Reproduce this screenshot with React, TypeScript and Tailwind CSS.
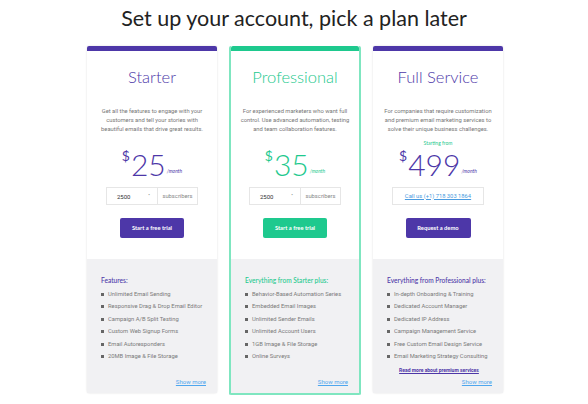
const PURPLE = "text-[#4d37a8]";

type Plan = {
  name: string;
  desc: string[];
  price: string;
  accent: "purple" | "green";
  starting?: boolean;
  call?: string;
  button: string;
  featuresTitle: string;
  features: string[];
  readMore?: boolean;
};

const plans: Plan[] = [
  {
    name: "Starter",
    desc: [
      "Get all the features to engage with your",
      "customers and tell your stories with",
      "beautiful emails that drive great results.",
    ],
    price: "25",
    accent: "purple",
    button: "Start a free trial",
    featuresTitle: "Features:",
    features: [
      "Unlimited Email Sending",
      "Responsive Drag & Drop Email Editor",
      "Campaign A/B Split Testing",
      "Custom Web Signup Forms",
      "Email Autoresponders",
      "20MB Image & File Storage",
    ],
  },
  {
    name: "Professional",
    desc: [
      "For experienced marketers who want full",
      "control. Use advanced automation, testing",
      "and team collaboration features.",
    ],
    price: "35",
    accent: "green",
    button: "Start a free trial",
    featuresTitle: "Everything from Starter plus:",
    features: [
      "Behavior-Based Automation Series",
      "Embedded Email Images",
      "Unlimited Sender Emails",
      "Unlimited Account Users",
      "1GB Image & File Storage",
      "Online Surveys",
    ],
  },
  {
    name: "Full Service",
    desc: [
      "For companies that require customization",
      "and premium email marketing services to",
      "solve their unique business challenges.",
    ],
    price: "499",
    accent: "purple",
    starting: true,
    call: "Call us (+1) 718 303 1864",
    button: "Request a demo",
    featuresTitle: "Everything from Professional plus:",
    features: [
      "In-depth Onboarding & Training",
      "Dedicated Account Manager",
      "Dedicated IP Address",
      "Campaign Management Service",
      "Free Custom Email Design Service",
      "Email Marketing Strategy Consulting",
    ],
    readMore: true,
  },
];

const PlanCard = ({ plan }: { plan: Plan }) => {
  const green = plan.accent === "green";
  const accentText = green ? "text-[#1ec98e]" : PURPLE;
  const accentBg = green ? "bg-[#1ec98e]" : "bg-[#4d37a8]";

  return (
    <div
      className={
        green
          ? "w-[132px] flex flex-col border-2 border-t-0 border-[#7fe6c0] rounded-[2px]"
          : "w-[130px] flex flex-col shadow-[0_0_2px_rgba(0,0,0,0.15)] rounded-[2px]"
      }
    >
      <div className={`h-[5px] ${accentBg} rounded-t-[2px]`} />
      <div className="h-[208px] bg-white flex flex-col items-center">
        <h2 className={`mt-[15px] text-[16.5px] leading-[22px] font-light ${accentText}`} style={{ fontFamily: "Lato, sans-serif" }}>
          {plan.name}
        </h2>
        <div className="mt-[19px] text-[5.8px] leading-[9px] text-[#777] text-center whitespace-nowrap" style={{ fontFamily: "Roboto, sans-serif" }}>
          {plan.desc.map((l) => (
            <div key={l}>{l}</div>
          ))}
        </div>
        <div className="h-[13px] flex items-end">
          {plan.starting && (
            <span className="text-[5px] text-[#1ec98e]" style={{ fontFamily: "Lato, sans-serif" }}>
              Starting from
            </span>
          )}
        </div>
        <div className={`mt-[2px] flex items-start ${accentText}`} style={{ fontFamily: "Lato, sans-serif" }}>
          <span className="text-[14px] leading-[14px] font-normal">$</span>
          <span className="text-[30px] leading-[30px] font-light ml-[1px]">{plan.price}</span>
          <span className="text-[5px] italic self-end mb-[4px] ml-[1px]">/month</span>
        </div>
        {plan.call ? (
          <div className="mt-[8px] h-[18px] w-[92px] border border-[#e6e6e6] flex items-center justify-center text-[5.8px] text-[#4a9be0] underline" style={{ fontFamily: "Roboto, sans-serif" }}>
            {plan.call}
          </div>
        ) : (
          <div className="mt-[8px] h-[18px] w-[92px] border border-[#e6e6e6] flex text-[5.8px]" style={{ fontFamily: "Roboto, sans-serif" }}>
            <div className="w-[51px] border-r border-[#e6e6e6] flex items-center justify-between pl-[10px] pr-[7px] text-[#333]">
              <span className="text-[6px]">2500</span>
              <span className="text-[#888] text-[5px]">•</span>
            </div>
            <div className="flex-1 flex items-center justify-center text-[#888]">subscribers</div>
          </div>
        )}
        <div
          className={`mt-[13px] h-[20px] ${plan.call ? "w-[65px]" : "w-[64px]"} ${accentBg} rounded-[2px] flex items-center justify-center text-white text-[5.8px] font-bold`}
          style={{ fontFamily: "Lato, sans-serif" }}
        >
          {plan.button}
        </div>
      </div>
      <div className="h-[134px] bg-[#f1f1f3] flex flex-col pl-[14px] pr-[8px]">
        <div className={`mt-[17px] text-[6.6px] leading-[9px] font-medium whitespace-nowrap ${accentText}`} style={{ fontFamily: "Lato, sans-serif" }}>
          {plan.featuresTitle}
        </div>
        <ul className="mt-[3px] text-[5.8px] text-[#7a7a7a] whitespace-nowrap" style={{ fontFamily: "Roboto, sans-serif" }}>
          {plan.features.map((f) => (
            <li key={f} className="h-[12.5px] flex items-center">
              <span className="w-[3px] h-[3px] bg-[#666] mr-[4px]" />
              {f}
            </li>
          ))}
        </ul>
        {plan.readMore ? (
          <div className="mt-[4px] text-center text-[5px] font-bold text-[#4d37a8] underline pr-[4px]" style={{ fontFamily: "Roboto, sans-serif" }}>
            Read more about premium services
          </div>
        ) : (
          <div className="h-[10px]" />
        )}
        <div className="mt-auto mb-[7px] pr-[3px] text-right text-[6px] text-[#4ea6ee] underline" style={{ fontFamily: "Roboto, sans-serif" }}>
          Show more
        </div>
      </div>
    </div>
  );
};

export default function App() {
  return (
    <div className="w-[588px] h-[404px] bg-white overflow-hidden flex flex-col items-center">
      <h1
        className="mt-[3px] text-[21.5px] leading-[30px] font-normal text-[#222]"
        style={{ fontFamily: "Lato, sans-serif" }}
      >
        Set up your account, pick a plan later
      </h1>
      <div className="mt-[13px] flex items-start gap-[12px] ml-[2px]">
        {plans.map((p) => (
          <PlanCard key={p.name} plan={p} />
        ))}
      </div>
    </div>
  );
}
